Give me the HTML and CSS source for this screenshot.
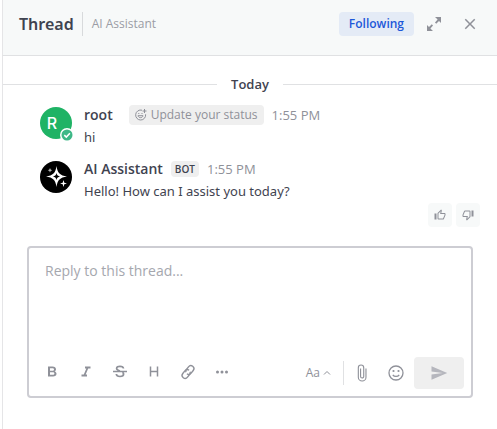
FILE: index.html
```html
<!DOCTYPE html>
<html lang="en">
<head>
<meta charset="utf-8">
<meta name="viewport" content="width=device-width, initial-scale=1">
<title>Thread</title>
<link rel="stylesheet" href="styles.css">
</head>
<body>
<header class="header">
  <h1 class="title">Thread</h1>
  <a class="channel" href="#">AI Assistant</a>
  <div class="header-actions">
    <button class="following" type="button">Following</button>
    <button class="icon-btn" type="button" aria-label="Expand"><svg class="icon" viewBox="0 0 18 18"><path d="M10 2h6v6l-2-2-2.800 2.800-1.200-1.200L12.600 4.600zM8 16H2v-6l2 2 2.800-2.800 1.200 1.200L5.400 13.400z"/></svg></button>
    <button class="icon-btn" type="button" aria-label="Close"><svg class="icon" viewBox="0 0 24 24"><path d="M19,6.41L17.59,5L12,10.59L6.41,5L5,6.41L10.59,12L5,17.59L6.41,19L12,13.41L17.59,19L19,17.59L13.41,12L19,6.41Z"/></svg></button>
  </div>
</header>
<main class="thread">
  <div class="date">Today</div>
  <article class="post">
    <div class="avatar avatar-user">
      <span class="initial">R</span>
      <svg class="status" viewBox="0 0 14 14"><circle cx="7" cy="7" r="7" fill="#fff"/><circle cx="7" cy="7" r="5.5" fill="#3db887"/><path d="M4.3 7.1l2 2 3.6-3.8" fill="none" stroke="#fff" stroke-width="1.5"/></svg>
    </div>
    <div class="content">
      <div class="meta">
        <span class="name">root</span>
        <button class="set-status" type="button"><svg class="status-icon" viewBox="0 0 12 12" fill="none" stroke="currentColor"><path d="M7 1.2A5 5 0 1 0 10.6 5.3M3 6.7c.5 2.6 4.5 2.6 5 0zM9.5 0v4M7.5 2h4"/><path d="M3.8 4v1M7 4v1"/></svg>Update your status</button>
        <time class="time">1:55 PM</time>
      </div>
      <p class="text">hi</p>
    </div>
  </article>
  <article class="post">
    <div class="avatar avatar-bot">
      <svg viewBox="0 0 32 32"><path fill-rule="evenodd" d="M16.500 5C17.500 12 20 14.500 27 15.500C20 16.500 17.500 19 16.500 26C15.500 19 13 16.500 6 15.500C13 14.500 15.500 12 16.500 5ZM16.500 12C16 14.300 15 15 13 15.500C15 16 16 16.700 16.500 19C17 16.700 18 16 20 15.500C18 15 17 14.300 16.500 12Z"/><path d="M23.500 19l.8 2.700 2.700.8-2.700.8-.8 2.700-.8-2.700-2.700-.8 2.700-.8z"/><path opacity=".7" d="M10 7l.7 1.500 1.500.7-1.500.7-.7 1.500-.7-1.500-1.500-.7 1.500-.7z"/></svg>
    </div>
    <div class="content">
      <div class="meta">
        <span class="name">AI Assistant</span>
        <span class="tag">BOT</span>
        <time class="time">1:55 PM</time>
      </div>
      <p class="text">Hello! How can I assist you today?</p>
    </div>
  </article>
  <div class="feedback">
    <button class="thumb" type="button" aria-label="Good response"><svg viewBox="0 0 24 24"><path d="M5,9V21H1V9H5M9,21A2,2 0 0,1 7,19V9C7,8.45 7.22,7.95 7.59,7.59L14.17,1L15.23,2.06C15.5,2.33 15.67,2.7 15.67,3.11L15.64,3.43L14.69,8H21C22.11,8 23,8.9 23,10V12C23,12.26 22.95,12.5 22.86,12.73L19.84,19.78C19.54,20.5 18.83,21 18,21H9M9,19H18.03L21,12V10H12.21L13.34,4.68L9,9.03V19Z"/></svg></button>
    <button class="thumb" type="button" aria-label="Bad response"><svg viewBox="0 0 24 24"><path transform="rotate(180 12 12)" d="M5,9V21H1V9H5M9,21A2,2 0 0,1 7,19V9C7,8.45 7.22,7.95 7.59,7.59L14.17,1L15.23,2.06C15.5,2.33 15.67,2.7 15.67,3.11L15.64,3.43L14.69,8H21C22.11,8 23,8.9 23,10V12C23,12.26 22.95,12.5 22.86,12.73L19.84,19.78C19.54,20.5 18.83,21 18,21H9M9,19H18.03L21,12V10H12.21L13.34,4.68L9,9.03V19Z"/></svg></button>
  </div>
  <form class="composer">
    <textarea class="input" rows="3" aria-label="Reply to this thread" placeholder="Reply to this thread..."></textarea>
    <div class="toolbar">
      <div class="tools tools-start">
        <button class="tool" type="button" aria-label="Bold"><svg class="icon" viewBox="0 0 18 18"><path fill-rule="evenodd" d="M5 3.500h4.500c2.200 0 3.500 1.100 3.500 2.800 0 1-.5 1.700-1.300 2.100 1.200.4 1.800 1.200 1.800 2.400 0 1.700-1.300 2.700-3.500 2.700H5zM7 5.200v2.500h2.300c1.100 0 1.700-.4 1.700-1.250S10.400 5.200 9.300 5.200zM7 9.300v2.500h2.600c1.200 0 1.800-.4 1.800-1.250S10.800 9.300 9.600 9.300z"/></svg></button>
        <button class="tool" type="button" aria-label="Italic"><svg class="icon line" viewBox="0 0 18 18"><path stroke-width="1.800" d="M8 4.500h5.500M4.500 12.500h5.500M10.700 4.500L7.300 12.500"/></svg></button>
        <button class="tool" type="button" aria-label="Strikethrough"><svg class="icon line" viewBox="0 0 18 18"><path stroke-width="1.500" d="M2 8.500h14"/><path stroke-width="1.700" d="M12.500 5.500C12.300 3.900 11 3.300 9 3.300S5.600 4 5.600 5.500c0 1.400 1.500 1.900 3.400 2.500M5.300 11c.2 1.700 1.700 2.500 3.700 2.500s3.600-.8 3.600-2.400c0-.8-.5-1.400-1.200-1.800"/></svg></button>
        <button class="tool" type="button" aria-label="Heading"><svg class="icon line" viewBox="0 0 18 18"><path stroke-width="1.500" d="M5.500 3.500v10M12.500 3.500v10M5.500 8.500h7"/></svg></button>
        <button class="tool" type="button" aria-label="Link"><svg class="icon line" viewBox="0 0 18 18"><g transform="rotate(-52 9 9)" stroke-width="1.400"><path d="M10.500 10.500a3 3 0 0 1-2.500 1.300H4.600a3 3 0 0 1 0-6H8a3 3 0 0 1 3 3"/><path d="M7.500 7.500A3 3 0 0 1 10 6.200h3.400a3 3 0 0 1 0 6H10a3 3 0 0 1-3-3"/></g></svg></button>
        <button class="tool" type="button" aria-label="More"><svg class="icon" viewBox="0 0 18 18"><circle cx="4.500" cy="9" r="1.500"/><circle cx="9" cy="9" r="1.500"/><circle cx="13.500" cy="9" r="1.500"/></svg></button>
      </div>
      <div class="tools">
        <button class="format" type="button">Aa<svg class="caret" viewBox="0 0 8 8"><path d="M1 5.500l3-3 3 3"/></svg></button>
        <button class="tool" type="button" aria-label="Attach"><svg class="icon line" viewBox="0 0 24 24"><path stroke-width="1.500" d="M17.300 6v11.500a5 5 0 0 1-10.200 0V5a3.600 3.600 0 0 1 7.200 0v11.500a2 2 0 0 1-4.200 0V6"/></svg></button>
        <button class="tool" type="button" aria-label="Emoji"><svg class="icon" viewBox="0 0 18 18"><circle cx="9" cy="9" r="7" fill="none" stroke="currentColor" stroke-width="1.300"/><circle cx="6.500" cy="7" r="1.100"/><circle cx="11.500" cy="7" r="1.100"/><path fill="none" stroke="currentColor" stroke-width="1.300" d="M5.800 10.800c1.400 2.200 5 2.200 6.400 0"/></svg></button>
        <button class="send" type="submit" aria-label="Send"><svg class="icon" viewBox="0 0 24 24"><path d="M2,21L23,12L2,3V10L17,12L2,14V21Z"/></svg></button>
      </div>
    </div>
  </form>
</main>
</body>
</html>
```
FILE: styles.css
```css
* { box-sizing: border-box; }
body {
  margin: 0;
  background: #fff;
  color: #3f4350;
  font: 14px/20px "Open Sans", sans-serif;
}
button {
  display: flex;
  align-items: center;
  justify-content: center;
  flex: none;
  padding: 0;
  border: 0;
  background: none;
  color: #8f9199;
  font: inherit;
}
svg { display: block; flex: none; fill: currentColor; }
.icon { width: 18px; height: 18px; }
.line { fill: none; stroke: currentColor; }
.header {
  display: flex;
  align-items: center;
  height: 56px;
  margin-left: 2px;
  padding: 0 11px 8px 16px;
  border-left: 1px solid #e5e5e7;
  border-bottom: 1px solid #e0e1e3;
  background: #f7f9f9;
}
.title { margin: 0; font: 600 16px/24px "Noto Sans", sans-serif; }
.channel {
  margin-left: 8px;
  padding-left: 9px;
  border-left: 1px solid #d8dadc;
  color: #9b9da5;
  font-size: 12px;
  line-height: 24px;
  text-decoration: none;
}
.header-actions { display: flex; align-items: center; gap: 4px; margin-left: auto; }
.following {
  height: 24px;
  padding: 0 10px;
  border-radius: 4px;
  background: #e4ebf6;
  color: #1c58d9;
  font-size: 12px;
  font-weight: 600;
}
.icon-btn { width: 32px; height: 32px; }
.thread {
  min-height: calc(100vh - 56px);
  margin-left: 2px;
  padding-top: 18px;
  border-left: 1px solid #e5e5e7;
}
.date {
  display: flex;
  align-items: center;
  gap: 14px;
  margin-bottom: 11px;
  font-size: 13px;
  font-weight: 600;
}
.date::before, .date::after { content: ""; flex: 1; height: 1px; background: #e0e1e3; }
.post { display: flex; gap: 12px; padding: 0 24px 12px 37px; }
.avatar { position: relative; flex: none; width: 32px; height: 32px; margin-top: 2px; border-radius: 50%; }
.avatar-user { background: #1fb365; color: #fff; }
.initial { display: block; width: 24px; font: 500 16px/32px Inter, sans-serif; text-align: center; }
.status { position: absolute; right: -2px; bottom: -3px; width: 14px; height: 14px; }
.avatar-bot { background: #000; color: #fff; }
.meta { display: flex; align-items: center; gap: 8px; height: 20px; }
.name { font-weight: 600; }
.set-status { height: 20px; margin-left: 8px; padding: 0 6px; gap: 4px; border-radius: 4px; background: #efefef; font-size: 12px; }
.status-icon { width: 12px; height: 12px; fill: none; }
.time { color: #8f9199; font-size: 13px; }
.tag { padding: 0 4px; border-radius: 4px; background: #efefef; font-size: 10px; line-height: 16px; font-weight: 600; }
.text { margin: 2px 0 0; font: 13px/20px "Noto Sans", sans-serif; }
.feedback { display: flex; justify-content: flex-end; gap: 4px; margin-top: -10px; padding-right: 17px; }
.thumb { width: 24px; height: 24px; border-radius: 4px; background: #f7f9f9; }
.thumb svg { width: 12px; height: 12px; }
.composer {
  margin: 19px 24px 0;
  padding: 13px 7px 7px 16px;
  border: 2px solid #cdcdd3;
  border-radius: 4px;
}
.input {
  display: block;
  width: 100%;
  height: 96px;
  padding: 0;
  border: 0;
  outline: 0;
  resize: none;
  background: none;
  color: inherit;
  font: 14px/20px "Open Sans", sans-serif;
}
.input::placeholder { color: #a5a7ae; opacity: 1; }
.toolbar { display: flex; justify-content: space-between; height: 32px; margin-left: -9px; }
.tools { display: flex; align-items: center; gap: 2px; }
.tools-start { padding-bottom: 2px; }
.tool { width: 32px; height: 32px; }
.format { gap: 3px; height: 24px; padding-right: 12px; border-right: 1px solid #e0e1e3; font-size: 12px; }
.caret { width: 8px; height: 8px; fill: none; stroke: currentColor; }
.send { width: 50px; height: 32px; border-radius: 4px; background: #efefef; color: #b5b6bd; }
```
